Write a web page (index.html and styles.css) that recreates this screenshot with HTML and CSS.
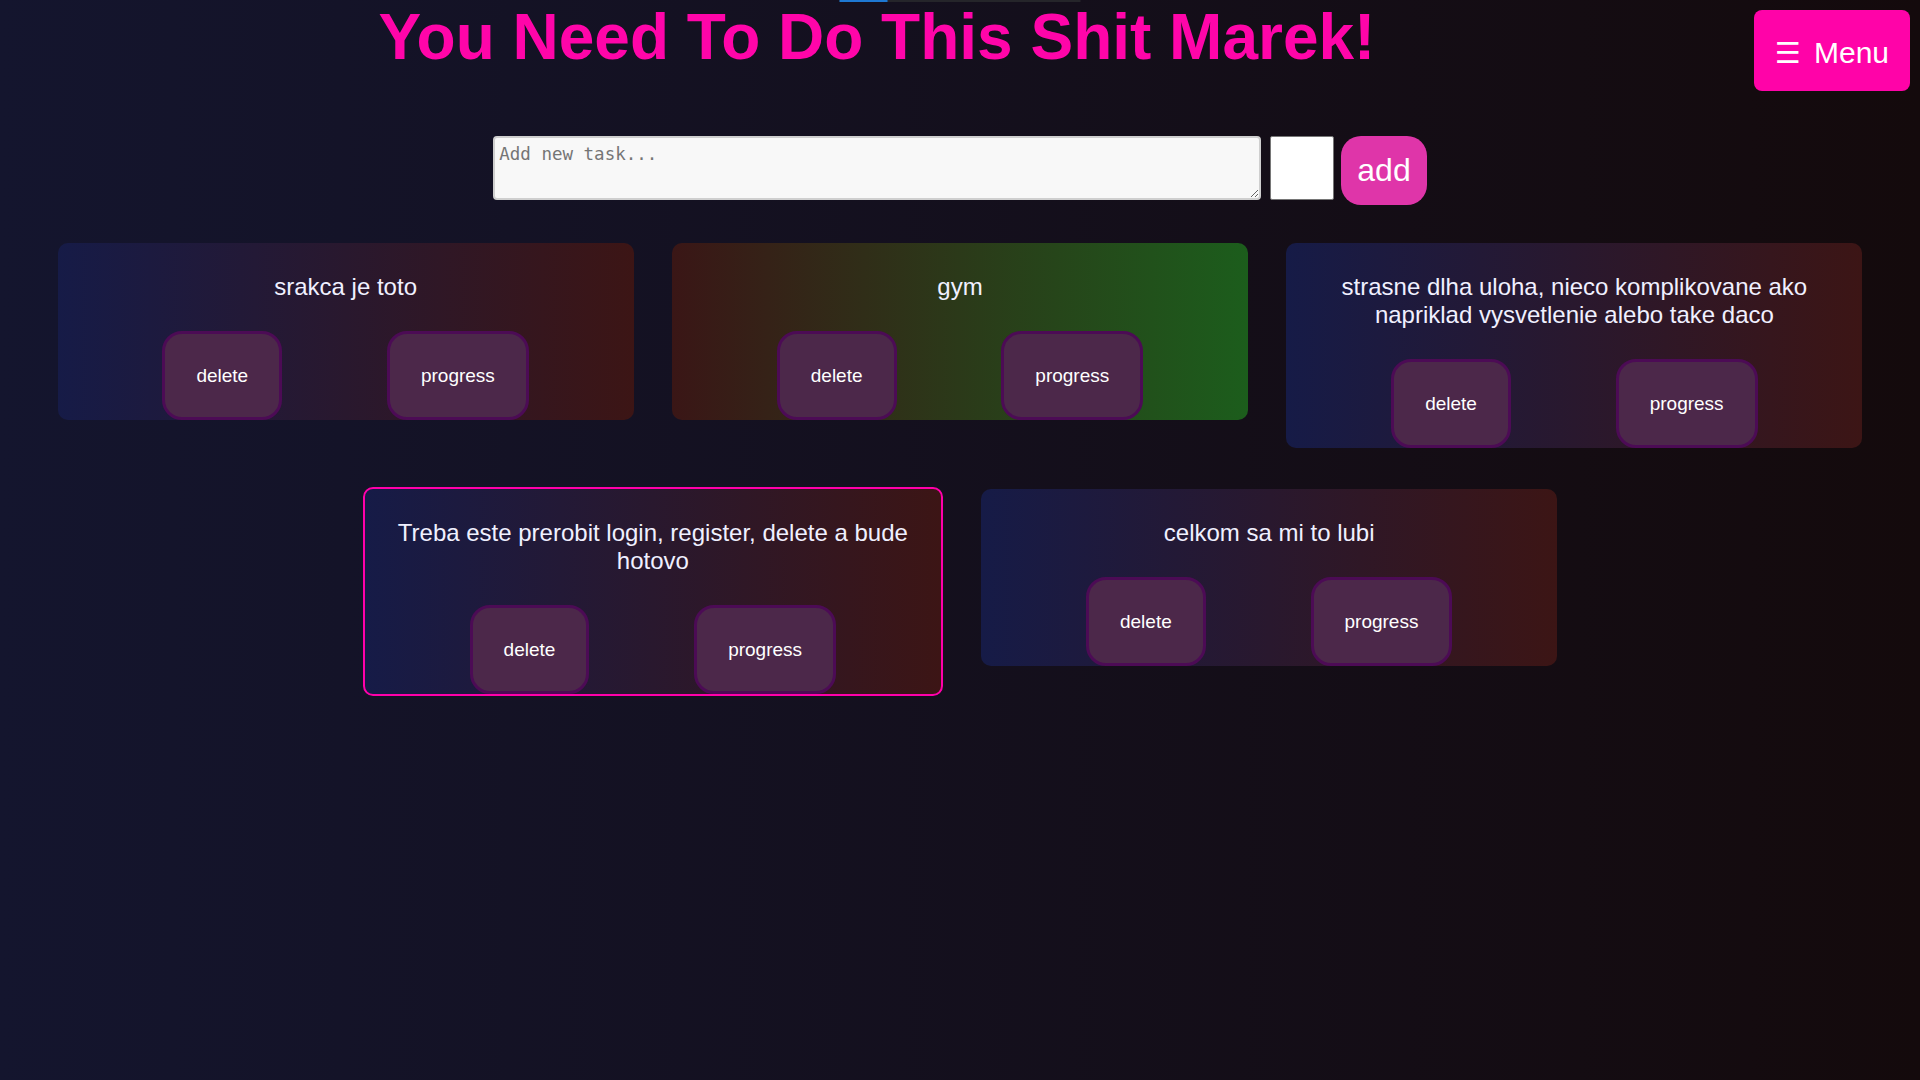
FILE: index.html
```html
<!DOCTYPE html>
<html lang="sk">
<head>
<meta charset="utf-8">
<title>You Need To Do This Shit Marek!</title>
<link rel="stylesheet" href="styles.css">
</head>
<body>
  <div class="top-progress"><div class="top-progress-fill"></div></div>
  <header class="header">
    <h1 class="title">You Need To Do This Shit Marek!</h1>
    <button class="menu-btn"><span class="menu-icon">☰</span> Menu</button>
  </header>

  <form class="add-form">
    <textarea class="task-input" placeholder="Add new task..."></textarea>
    <div class="color-swatch"></div>
    <button type="button" class="add-btn">add</button>
  </form>

  <main class="cards">
    <div class="card">
      <p class="card-text">srakca je toto</p>
      <div class="card-actions">
        <button class="card-btn">delete</button>
        <button class="card-btn">progress</button>
      </div>
    </div>
    <div class="card card-progress">
      <p class="card-text">gym</p>
      <div class="card-actions">
        <button class="card-btn">delete</button>
        <button class="card-btn">progress</button>
      </div>
    </div>
    <div class="card">
      <p class="card-text">strasne dlha uloha, nieco komplikovane ako napriklad vysvetlenie alebo take daco</p>
      <div class="card-actions">
        <button class="card-btn">delete</button>
        <button class="card-btn">progress</button>
      </div>
    </div>
    <div class="card card-active">
      <p class="card-text">Treba este prerobit login, register, delete a bude hotovo</p>
      <div class="card-actions">
        <button class="card-btn">delete</button>
        <button class="card-btn">progress</button>
      </div>
    </div>
    <div class="card">
      <p class="card-text">celkom sa mi to lubi</p>
      <div class="card-actions">
        <button class="card-btn">delete</button>
        <button class="card-btn">progress</button>
      </div>
    </div>
  </main>
</body>
</html>
```

FILE: styles.css
```css
* {
  box-sizing: border-box;
}

html, body {
  margin: 0;
  padding: 0;
}

body {
  min-height: 100vh;
  background: linear-gradient(to right, #14152e, #140a0c);
  font-family: "Liberation Sans", Arial, sans-serif;
  color: #f0f0ff;
}

.top-progress {
  position: absolute;
  top: 0;
  left: 50%;
  transform: translateX(-50%);
  width: 241px;
  height: 2px;
  background: #25252a;
}

.top-progress-fill {
  width: 20%;
  height: 100%;
  background: #1e78d2;
}

.header {
  display: flex;
  align-items: flex-start;
}

.title {
  flex: 1;
  margin: 0;
  text-align: center;
  font-family: "Liberation Sans", Arial, sans-serif;
  font-weight: 700;
  font-size: 64px;
  line-height: normal;
  color: #ff05a9;
}

.menu-btn {
  margin: 10px 10px 0 0;
  width: 156px;
  height: 81px;
  display: flex;
  align-items: center;
  justify-content: center;
  gap: 13px;
  padding: 5px 0 0;
  border: none;
  border-radius: 8px;
  background: #ff03a8;
  color: #ffffff;
  font-family: "Liberation Sans", Arial, sans-serif;
  font-size: 30px;
}

.menu-icon {
  font-family: "DejaVu Sans", sans-serif;
  font-size: 29px;
}

.add-form {
  display: flex;
  justify-content: center;
  align-items: flex-start;
  margin: 45px 0 0;
}

.task-input {
  width: 768px;
  height: 64px;
  padding: 6px 4px 4px;
  border: 2px solid #cfcfcf;
  border-radius: 4px;
  background: #f8f8f8;
  font-family: "DejaVu Sans Mono", "Liberation Mono", monospace;
  font-size: 17.5px;
  color: #222;
}

.task-input::placeholder {
  color: #757575;
}

.color-swatch {
  margin-left: 9px;
  width: 64px;
  height: 64px;
  background: #ffffff;
  border: 1px solid #767676;
  border-radius: 2px;
}

.add-btn {
  margin-left: 7px;
  padding: 16px;
  border: none;
  border-radius: 20px;
  background: #df35a9;
  color: #ffffff;
  font-family: "Liberation Sans", Arial, sans-serif;
  font-size: 32px;
  line-height: normal;
}

.cards {
  display: flex;
  flex-wrap: wrap;
  justify-content: center;
  align-items: baseline;
  margin-top: 19px;
}

.card {
  width: 30%;
  margin: 1%;
  padding: 30px 10px 0;
  border-radius: 10px;
  background: linear-gradient(to right, #161b47, #3c1515);
  text-align: center;
}

.card-progress {
  background: linear-gradient(to right, #3a1616, #1c5d1c);
}

.card-active {
  width: calc(30% + 4px);
  border: 2px solid #ff00aa;
}

.card-text {
  margin: 0 0 30px;
  font-size: 24px;
  line-height: normal;
  color: #f0f0ff;
}

.card-actions {
  display: flex;
  justify-content: space-evenly;
  margin: 0 -10px;
}

.card-btn {
  padding: 30px 31px;
  border: 3px solid #4c0b55;
  border-radius: 20px;
  background: #4c284a;
  color: #ffffff;
  font-family: "Liberation Sans", Arial, sans-serif;
  font-size: 19px;
  line-height: 23px;
}
```
